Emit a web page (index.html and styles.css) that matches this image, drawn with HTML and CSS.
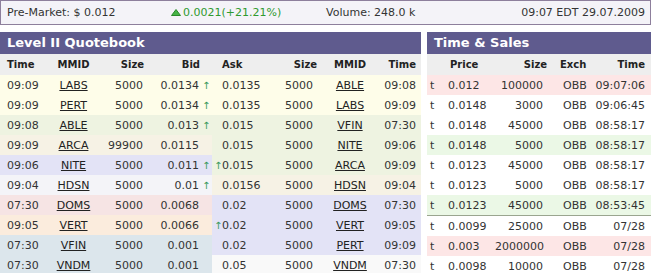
FILE: index.html
```html
<!DOCTYPE html>
<html lang="en">
<head>
    <meta charset="UTF-8">
    <title>Level II Quotebook</title>
    <link rel="stylesheet" href="styles.css">
</head>
<body>

    <!-- Quote bar -->
    <div class="quote-bar">
        <span>Pre-Market: $ 0.012</span>
        <span class="change">
            <svg class="tri" width="10" height="7" viewBox="0 0 10 7"><polygon points="5,0.5 9.5,6.5 0.5,6.5" fill="#46b446" stroke="#2a8a2a" stroke-width="1"/></svg>
            0.0021(+21.21%)
        </span>
        <span>Volume: 248.0 k</span>
        <span class="stamp">09:07 EDT 29.07.2009</span>
    </div>

    <div class="panels">

        <!-- Level II -->
        <div class="panel level2">
            <div class="panel-title">Level II Quotebook</div>
            <table class="book">
                <colgroup>
                    <col style="width:50px"><col style="width:47px"><col style="width:48px"><col style="width:55px"><col style="width:12px">
                    <col style="width:10px"><col style="width:53px"><col style="width:42px"><col style="width:66px"><col style="width:38px">
                </colgroup>
                <thead>
                    <tr>
                        <th class="time">Time</th><th class="mmid">MMID</th><th class="size">Size</th><th class="bid">Bid</th><th></th>
                        <th></th><th class="ask">Ask</th><th class="size">Size</th><th class="mmid">MMID</th><th class="rtime">Time</th>
                    </tr>
                </thead>
                <tbody>
                    <tr>
                        <td class="time c-yellow">09:09</td><td class="mmid c-yellow"><a href="#">LABS</a></td><td class="size c-yellow">5000</td><td class="bid c-yellow">0.0134</td><td class="arr c-yellow">↑</td>
                        <td class="arr-a c-yellow"></td><td class="ask c-yellow">0.0135</td><td class="size c-yellow">5000</td><td class="mmid c-yellow"><a href="#">ABLE</a></td><td class="rtime c-yellow">09:08</td>
                    </tr>
                    <tr>
                        <td class="time c-yellow">09:09</td><td class="mmid c-yellow"><a href="#">PERT</a></td><td class="size c-yellow">5000</td><td class="bid c-yellow">0.0134</td><td class="arr c-yellow">↑</td>
                        <td class="arr-a c-yellow"></td><td class="ask c-yellow">0.0135</td><td class="size c-yellow">5000</td><td class="mmid c-yellow"><a href="#">LABS</a></td><td class="rtime c-yellow">09:09</td>
                    </tr>
                    <tr>
                        <td class="time c-green">09:08</td><td class="mmid c-green"><a href="#">ABLE</a></td><td class="size c-green">5000</td><td class="bid c-green">0.013</td><td class="arr c-green">↑</td>
                        <td class="arr-a c-green"></td><td class="ask c-green">0.015</td><td class="size c-green">5000</td><td class="mmid c-green"><a href="#">VFIN</a></td><td class="rtime c-green">07:30</td>
                    </tr>
                    <tr>
                        <td class="time c-beige">09:09</td><td class="mmid c-beige"><a href="#">ARCA</a></td><td class="size c-beige">99900</td><td class="bid c-beige">0.0115</td><td class="arr c-beige"></td>
                        <td class="arr-a c-green"></td><td class="ask c-green">0.015</td><td class="size c-green">5000</td><td class="mmid c-green"><a href="#">NITE</a></td><td class="rtime c-green">09:06</td>
                    </tr>
                    <tr>
                        <td class="time c-lav">09:06</td><td class="mmid c-lav"><a href="#">NITE</a></td><td class="size c-lav">5000</td><td class="bid c-lav">0.011</td><td class="arr c-lav">↑</td>
                        <td class="arr-a c-green">↑</td><td class="ask c-green">0.015</td><td class="size c-green">5000</td><td class="mmid c-green"><a href="#">ARCA</a></td><td class="rtime c-green">09:09</td>
                    </tr>
                    <tr>
                        <td class="time c-pale">09:04</td><td class="mmid c-pale"><a href="#">HDSN</a></td><td class="size c-pale">5000</td><td class="bid c-pale">0.01</td><td class="arr c-pale">↑</td>
                        <td class="arr-a c-beige"></td><td class="ask c-beige">0.0156</td><td class="size c-beige">5000</td><td class="mmid c-beige"><a href="#">HDSN</a></td><td class="rtime c-beige">09:04</td>
                    </tr>
                    <tr>
                        <td class="time c-pink">07:30</td><td class="mmid c-pink"><a href="#">DOMS</a></td><td class="size c-pink">5000</td><td class="bid c-pink">0.0068</td><td class="arr c-pink"></td>
                        <td class="arr-a c-lav"></td><td class="ask c-lav">0.02</td><td class="size c-lav">5000</td><td class="mmid c-lav"><a href="#">DOMS</a></td><td class="rtime c-lav">07:30</td>
                    </tr>
                    <tr>
                        <td class="time c-peach">09:05</td><td class="mmid c-peach"><a href="#">VERT</a></td><td class="size c-peach">5000</td><td class="bid c-peach">0.0066</td><td class="arr c-peach"></td>
                        <td class="arr-a c-lav">↑</td><td class="ask c-lav">0.02</td><td class="size c-lav">5000</td><td class="mmid c-lav"><a href="#">VERT</a></td><td class="rtime c-lav">09:05</td>
                    </tr>
                    <tr>
                        <td class="time c-blue">07:30</td><td class="mmid c-blue"><a href="#">VFIN</a></td><td class="size c-blue">5000</td><td class="bid c-blue">0.001</td><td class="arr c-blue"></td>
                        <td class="arr-a c-lav"></td><td class="ask c-lav">0.02</td><td class="size c-lav">5000</td><td class="mmid c-lav"><a href="#">PERT</a></td><td class="rtime c-lav">09:09</td>
                    </tr>
                    <tr>
                        <td class="time c-blue">07:30</td><td class="mmid c-blue"><a href="#">VNDM</a></td><td class="size c-blue">5000</td><td class="bid c-blue">0.001</td><td class="arr c-blue"></td>
                        <td class="arr-a c-white"></td><td class="ask c-white">0.05</td><td class="size c-white">5000</td><td class="mmid c-white"><a href="#">VNDM</a></td><td class="rtime c-white">07:30</td>
                    </tr>
                </tbody>
            </table>
        </div>

        <!-- Time & Sales -->
        <div class="panel sales">
            <div class="panel-title">Time &amp; Sales</div>
            <table class="trades">
                <colgroup>
                    <col style="width:18px"><col style="width:50px"><col style="width:52px"><col style="width:43px"><col style="width:61px">
                </colgroup>
                <thead>
                    <tr><th></th><th class="price">Price</th><th class="size">Size</th><th class="exch">Exch</th><th class="ttime">Time</th></tr>
                </thead>
                <tbody>
                    <tr class="down"><td class="t">t</td><td class="price">0.012</td><td class="size">100000</td><td class="exch">OBB</td><td class="ttime">09:07:06</td></tr>
                    <tr><td class="t">t</td><td class="price">0.0148</td><td class="size">3000</td><td class="exch">OBB</td><td class="ttime">09:06:45</td></tr>
                    <tr><td class="t">t</td><td class="price">0.0148</td><td class="size">45000</td><td class="exch">OBB</td><td class="ttime">08:58:17</td></tr>
                    <tr class="up"><td class="t">t</td><td class="price">0.0148</td><td class="size">5000</td><td class="exch">OBB</td><td class="ttime">08:58:17</td></tr>
                    <tr><td class="t">t</td><td class="price">0.0123</td><td class="size">45000</td><td class="exch">OBB</td><td class="ttime">08:58:17</td></tr>
                    <tr><td class="t">t</td><td class="price">0.0123</td><td class="size">5000</td><td class="exch">OBB</td><td class="ttime">08:58:17</td></tr>
                    <tr class="up day-end"><td class="t">t</td><td class="price">0.0123</td><td class="size">45000</td><td class="exch">OBB</td><td class="ttime">08:53:45</td></tr>
                    <tr><td class="t">t</td><td class="price">0.0099</td><td class="size">25000</td><td class="exch">OBB</td><td class="ttime">07/28</td></tr>
                    <tr class="down"><td class="t">t</td><td class="price">0.003</td><td class="size">2000000</td><td class="exch">OBB</td><td class="ttime">07/28</td></tr>
                    <tr><td class="t">t</td><td class="price">0.0098</td><td class="size">10000</td><td class="exch">OBB</td><td class="ttime">07/28</td></tr>
                </tbody>
            </table>
        </div>

    </div>

</body>
</html>
```

FILE: styles.css
```css
/* General */
body {
    font-family: 'DejaVu Sans', Verdana, sans-serif;
    font-size: 11px;
    margin: 0;
    padding: 0;
    background-color: #ffffff;
    color: #333;
    width: 653px;
    overflow: hidden;
}

/* Quote bar */
.quote-bar {
    box-sizing: border-box;
    width: 651px;
    height: 25px;
    line-height: 23px;
    padding: 0 5px 0 6px;
    border: 1px solid #8d7f9c;
    background-color: #f4f3f8;
    display: grid;
    grid-template-columns: 164px 155px 1fr auto;
    align-items: center;
}
.quote-bar .change {
    color: #2f9a2f;
    display: flex;
    align-items: center;
    gap: 2px;
}
.quote-bar .tri {
    margin-top: -1px;
}

/* Panels */
.panels {
    display: flex;
    gap: 6px;
    margin-top: 7px;
}
.level2 {
    width: 421px;
}
.sales {
    width: 224px;
}
.panel-title {
    background-color: #5f5b8e;
    color: #ffffff;
    font-weight: bold;
    font-size: 13px;
    height: 22px;
    line-height: 22px;
    padding-left: 7px;
}

table {
    border-collapse: collapse;
    table-layout: fixed;
    width: 100%;
}
th {
    background-color: #eeeeee;
    color: #222;
    font-size: 10px;
    font-weight: bold;
    height: 21px;
    padding: 0;
    text-align: left;
}
td {
    height: 20px;
    padding: 0;
    white-space: nowrap;
}
a {
    color: #222;
    text-decoration: underline;
}

/* Level II columns */
.book .time { padding-left: 7px; }
.book .mmid { text-align: center; }
.book .size { text-align: right; padding-right: 2px; }
.book th.size { padding-right: 1px; }
.book .bid { text-align: right; padding-right: 1px; }
.book th.bid { padding-right: 0; }
.book .arr,
.book .arr-a { color: #3a9a5c; padding-left: 2px; font-size: 10px; }
.book td.size:nth-child(8) { padding-right: 4px; }
.book th.size:nth-child(8) { padding-right: 0; }
.book .rtime { text-align: right; padding-right: 5px; }

/* Price level shades */
.c-yellow { background-color: #fefde9; }
.c-green { background-color: #eef3e1; }
.c-beige { background-color: #f6f2e5; }
.c-lav { background-color: #e3e3f6; }
.c-pale { background-color: #f4f4f8; }
.c-pink { background-color: #f6e4e4; }
.c-peach { background-color: #fbecdd; }
.c-blue { background-color: #dce6ec; }
.c-white { background-color: #f9f9f9; }

/* Time & Sales columns */
.trades .t { padding-left: 3px; }
.trades .price { padding-left: 3px; }
.trades th.price { padding-left: 5px; }
.trades .size { text-align: right; padding-right: 4px; }
.trades th.size { padding-right: 0; }
.trades .exch { padding-left: 16px; }
.trades th.exch { padding-left: 13px; }
.trades .ttime { text-align: right; padding-right: 6px; }
.trades tr.up td { background-color: #ebf8e6; }
.trades tr.down td { background-color: #fde6e6; }
.trades tr.day-end td { border-bottom: 1px solid #9aa58f; }
```
